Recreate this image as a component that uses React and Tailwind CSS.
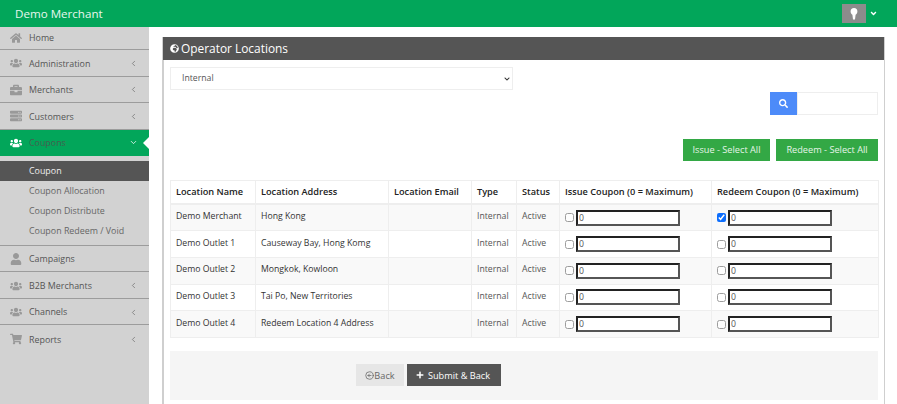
import React from 'react';
import { FaHome, FaUsers, FaBriefcase, FaUser, FaShoppingCart, FaPlus, FaSearch, FaAngleDown, FaChevronDown, FaGlobeAfrica, FaServer } from 'react-icons/fa';
import { CircleArrowLeft, ChevronLeft, ChevronDown } from 'lucide-react';

const menuTop = [
  { label: 'Home', icon: FaHome, h: 'h-[23px] pb-[1px]', noArrow: true },
  { label: 'Administration', icon: FaUsers },
  { label: 'Merchants', icon: FaBriefcase },
  { label: 'Customers', icon: FaServer },
];

const menuBottom = [
  { label: 'Campaigns', icon: FaUser, noArrow: true },
  { label: 'B2B Merchants', icon: FaUsers },
  { label: 'Channels', icon: FaUsers },
  { label: 'Reports', icon: FaShoppingCart, last: true },
];

const rows = [
  { name: 'Demo Merchant', address: 'Hong Kong', redeem: true },
  { name: 'Demo Outlet 1', address: 'Causeway Bay, Hong Komg' },
  { name: 'Demo Outlet 2', address: 'Mongkok, Kowloon' },
  { name: 'Demo Outlet 3', address: 'Tai Po, New Territories' },
  { name: 'Demo Outlet 4', address: 'Redeem Location 4 Address' },
];

const MenuItem = ({ item }) => {
  const Icon = item.icon;
  return (
    <div className={`flex items-center pl-[10px] pr-[11px] text-[#555] ${item.h || 'h-[26.6px] pt-[1px]'} ${item.last ? '' : 'border-b-[1.5px] border-[#9c9c9c]'}`}>
      <span className="w-[19px] flex"><Icon className="text-[12px] text-[#999]" /></span>
      <span className="text-[8.9px]">{item.label}</span>
      {!item.noArrow && <ChevronLeft size={9} strokeWidth={1.75} className="ml-auto text-[#666]" />}
    </div>
  );
};

const CouponCell = ({ checked }) => (
  <td className="border border-[#eeeeee] pl-[5px] pr-0">
    <div className="flex items-center">
      <input type="checkbox" defaultChecked={checked} className={`w-[9px] h-[9px] m-0 accent-[#0d6efd] ${checked ? '' : 'opacity-70'}`} />
      <input defaultValue="0" className="ml-[2px] w-[104px] h-[16px] border-2 border-t-[#222] border-l-[#222] border-r-[#555] border-b-[#555] pl-[1px] text-[8.7px] text-[#555] bg-white" />
    </div>
  </td>
);

const cell = 'border border-[#eeeeee] pl-[5px]';
const textCell = `${cell} pb-[2px]`;
const heads = ['Location Name', 'Location Address', 'Location Email', 'Type', 'Status', 'Issue Coupon (0 = Maximum)', 'Redeem Coupon (0 = Maximum)'];

export default function App() {
  return (
    <div className="w-[897px] h-[404px] overflow-hidden bg-white font-['Open_Sans',sans-serif] text-[8.9px] flex flex-col">
      <header className="h-[27px] bg-[#02a65a] flex items-center pl-[15px] pr-[19px] shrink-0">
        <span className="text-[11.6px] text-[#e6f7ee]">Demo Merchant</span>
        <div className="ml-auto w-[24px] h-[19px] bg-[#8c8c8c] flex items-center justify-center">
          <svg width="8" height="12" viewBox="0 0 8 12"><path d="M4 0C1.8 0 .6 1.5.6 3.4.6 5 1.5 6 2.4 6.8L3 11.5h2l.6-4.7C6.5 6 7.4 5 7.4 3.4 7.4 1.5 6.2 0 4 0z" fill="#fff" /></svg>
        </div>
        <FaAngleDown className="ml-[3px] text-[9px] text-white" />
      </header>

      <div className="flex flex-1 min-h-0">
        <aside className="w-[149px] bg-[#d2d2d2] shrink-0">
          {menuTop.map((item) => <MenuItem key={item.label} item={item} />)}
          <div className="h-[26.4px] bg-[#02a65a] flex items-center pl-[10px] pr-[11px] relative">
            <span className="w-[19px] flex"><FaUsers className="text-[12px] text-white" /></span>
            <span className="text-[8.9px] text-[#44604f]">Coupons</span>
            <ChevronDown size={9} strokeWidth={2} className="ml-auto text-white" />
            <span className="absolute right-0 top-[7px] border-y-[6px] border-r-[6px] border-y-transparent border-r-white" />
          </div>
          <div className="pt-[5px] pb-[3.5px] border-b-[1.5px] border-[#9c9c9c]">
            <div className="h-[20px] bg-[#555] text-[#eee] pl-[29px] flex items-center">Coupon</div>
            {['Coupon Allocation', 'Coupon Distribute', 'Coupon Redeem / Void'].map((label) => (
              <div key={label} className="h-[20px] pl-[29px] flex items-center text-[#666]">{label}</div>
            ))}
          </div>
          {menuBottom.map((item) => <MenuItem key={item.label} item={item} />)}
        </aside>

        <main className="flex-1 pt-[10px] pl-[13px] pr-[12px] min-w-0">
          <section className="h-full border-l-2 border-r border-[#cfcfcf]">
            <div className="h-[23px] -ml-[1px] bg-[#555] text-white flex items-center pl-[7px]">
              <FaGlobeAfrica className="text-[9px]" />
              <span className="ml-[2px] text-[11.9px]">Operator Locations</span>
            </div>
            <div className="pl-[6px] pr-[6px] pt-[7px]">
              <div className="relative w-[343px]">
                <select className="appearance-none w-full h-[22.5px] border border-[#eee] bg-white pl-[11px] text-[8.7px] text-[#555] block">
                  <option>Internal</option>
                </select>
                <FaChevronDown className="absolute right-[3px] top-[9px] text-[6px] text-[#333]" />
              </div>
              <div className="flex justify-end mt-[2.5px]">
                <button className="w-[27px] h-[23px] bg-[#4d8bf9] flex items-center justify-center text-white"><FaSearch className="text-[9px]" /></button>
                <input className="w-[81px] h-[23px] border border-[#eee] bg-white" />
              </div>
              <div className="flex justify-end gap-[6px] mt-[24px]">
                <button className="w-[87px] h-[22px] bg-[#33a845] text-[#e6f5e8] text-[9.2px]">Issue - Select All</button>
                <button className="w-[102px] h-[22px] bg-[#33a845] text-[#e6f5e8] text-[9.2px]">Redeem - Select All</button>
              </div>
              <table className="mt-[19px] w-[708px] table-fixed border-collapse border border-[#eeeeee] text-[8.7px] text-[#333]">
                <colgroup>
                  <col className="w-[85px]" />
                  <col className="w-[133px]" />
                  <col className="w-[83px]" />
                  <col className="w-[45px]" />
                  <col className="w-[43px]" />
                  <col className="w-[152px]" />
                  <col className="w-[167px]" />
                </colgroup>
                <thead>
                  <tr className="h-[23.5px] text-[#222] text-left text-[9.2px] border-b-2 border-[#eeeeee]">
                    {heads.map((h) => <th key={h} className={`${cell} font-semibold`}>{h}</th>)}
                  </tr>
                </thead>
                <tbody>
                  {rows.map((row, i) => (
                    <tr key={row.name} className={`h-[26.7px] ${i % 2 === 0 ? 'bg-[#f9f9f9]' : 'bg-white'}`}>
                      <td className={textCell}>{row.name}</td>
                      <td className={textCell}>{row.address}</td>
                      <td className={textCell}></td>
                      <td className={`${textCell} text-[#555]`}>Internal</td>
                      <td className={`${textCell} text-[#555]`}>Active</td>
                      <CouponCell />
                      <CouponCell checked={row.redeem} />
                    </tr>
                  ))}
                </tbody>
              </table>
              <div className="mt-[13px] w-[708px] h-[49px] bg-[#f5f5f5] flex items-center pl-[186px] gap-[3px]">
                <button className="w-[48px] h-[22px] bg-[#e6e6e6] text-[#666] text-[9.2px] flex items-center justify-center">
                  <CircleArrowLeft size={9} />
                  Back
                </button>
                <button className="w-[94px] h-[22px] bg-[#555] text-white text-[9.2px] flex items-center justify-center gap-[4px]">
                  <FaPlus className="text-[8px] -ml-[2px]" />
                  Submit &amp; Back
                </button>
              </div>
            </div>
          </section>
        </main>
      </div>
    </div>
  );
}
